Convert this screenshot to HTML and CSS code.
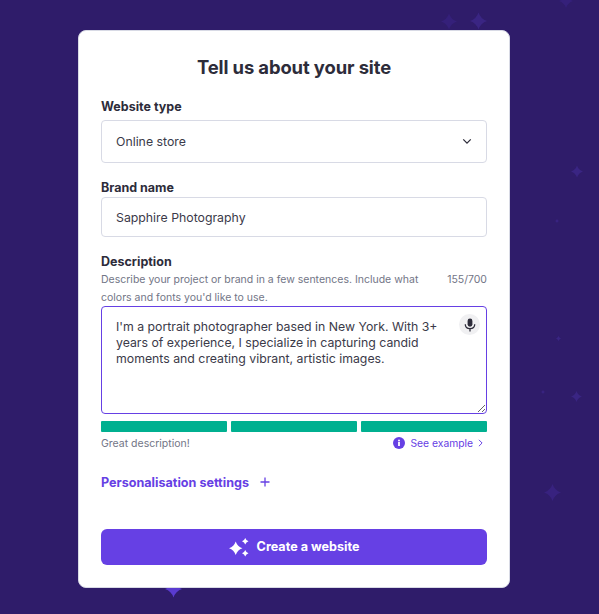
FILE: index.html
```html
<!DOCTYPE html>
<html lang="en">
<head>
<meta charset="utf-8">
<title>Tell us about your site</title>
<link rel="stylesheet" href="styles.css">
</head>
<body>
<svg width="0" height="0" class="defs"><defs><path id="star" d="M12 0Q15 9 24 12Q15 15 12 24Q9 15 0 12Q9 9 12 0Z"/></defs></svg>
<svg class="spark s1" viewBox="0 0 24 24"><use href="#star"/></svg>
<svg class="spark s2" viewBox="0 0 24 24"><use href="#star"/></svg>
<svg class="spark s3" viewBox="0 0 24 24"><use href="#star"/></svg>
<svg class="spark s4" viewBox="0 0 24 24"><use href="#star"/></svg>
<svg class="spark s5" viewBox="0 0 24 24"><use href="#star"/></svg>
<svg class="spark s6" viewBox="0 0 24 24"><use href="#star"/></svg>
<svg class="spark s7" viewBox="0 0 24 24"><use href="#star"/></svg>
<svg class="spark s8" viewBox="0 0 24 24"><use href="#star"/></svg>
<svg class="spark s9" viewBox="0 0 24 24"><use href="#star"/></svg>
<svg class="spark s10" viewBox="0 0 24 24"><use href="#star"/></svg>
<main class="card">
  <h1 class="title">Tell us about your site</h1>
  <div class="label label-type">Website type</div>
  <div class="field select">
    <span>Online store</span>
    <svg class="chevron" viewBox="0 0 12 8"><path d="M1.5 1.5L6 6L10.5 1.5" fill="none" stroke="#2d2c3a" stroke-width="1.5"/></svg>
  </div>
  <div class="label label-brand">Brand name</div>
  <div class="field input">Sapphire Photography</div>
  <div class="label label-desc">Description</div>
  <div class="help-row">
    <p class="help">Describe your project or brand in a few sentences. Include what colors and fonts you'd like to use.</p>
    <span class="count">155/700</span>
  </div>
  <div class="textarea">
    <p class="textarea-text">I'm a portrait photographer based in New York. With 3+ years of experience, I specialize in capturing candid moments and creating vibrant, artistic images.</p>
    <span class="mic">
      <svg viewBox="0 0 14 16" width="12" height="14"><rect x="4.2" y="0.5" width="5.6" height="9.5" rx="2.8" fill="#2d2c3a"/><path d="M1.5 7.2C1.5 10.4 4 12.3 7 12.3C10 12.3 12.5 10.4 12.5 7.2M7 12.3V15.5" fill="none" stroke="#2d2c3a" stroke-width="1.5"/></svg>
    </span>
  </div>
  <div class="bars"><span class="bar"></span><span class="bar"></span><span class="bar"></span></div>
  <div class="status">
    <span>Great description!</span>
    <span class="example">
      <svg class="info" viewBox="0 0 12 12"><circle cx="6" cy="6" r="6" fill="#6640e4"/><rect x="5.1" y="5" width="1.8" height="4" fill="#fff"/><rect x="5.1" y="2.7" width="1.8" height="1.6" fill="#fff"/></svg>
      <span>See example</span>
      <svg class="next" viewBox="0 0 6 10"><path d="M1 1L5 5L1 9" fill="none" stroke="#6640e4" stroke-width="1.2"/></svg>
    </span>
  </div>
  <div class="personal">
    <span>Personalisation settings</span>
    <svg class="plus" viewBox="0 0 10 10"><path d="M5 0.5V9.5M0.5 5H9.5" stroke="#6640e4" stroke-width="1.3"/></svg>
  </div>
  <div class="button">
    <svg class="magic" viewBox="0 0 20 20"><use href="#star" transform="translate(0 4.5) scale(.56)"/><use href="#star" transform="translate(13 1) scale(.27)"/><use href="#star" transform="translate(13 13) scale(.27)"/></svg>
    <span class="button-text">Create a website</span>
  </div>
</main>
</body>
</html>
```

FILE: styles.css
```css
* { box-sizing: border-box; }
html, body { margin: 0; height: 100%; }
body {
  position: relative;
  width: 599px;
  height: 614px;
  overflow: hidden;
  background: #2f1c6a;
  font-family: "Inter", "Noto Sans", sans-serif;
  color: #2d2c3a;
  padding: 30px 0 0 78px;
}
.defs { position: absolute; }
.spark { position: absolute; fill: #3a2583; }
.s1 { left: 441px; top: 13px; width: 16px; height: 17px; fill: #35207a; }
.s2 { left: 470px; top: 12px; width: 17px; height: 18px; }
.s3 { left: 559px; top: -6px; width: 14px; height: 14px; fill: #35207a; }
.s4 { left: 571px; top: 165px; width: 12px; height: 13px; }
.s5 { left: 571px; top: 391px; width: 11px; height: 11px; }
.s6 { left: 544px; top: 484px; width: 17px; height: 17px; fill: #38227f; }
.s7 { left: 165px; top: 580px; width: 17px; height: 18px; fill: #5a3bd0; }
.s8 { left: 556px; top: 336px; width: 5px; height: 5px; }
.s9 { left: 555px; top: 219px; width: 4px; height: 4px; }
.s10 { left: 541px; top: 390px; width: 4px; height: 4px; }
.card {
  position: relative;
  width: 432px;
  height: 558px;
  background: #fff;
  border: 1px solid #d8dae5;
  border-radius: 8px;
  padding: 0 22px;
  display: flex;
  flex-direction: column;
}
.title {
  margin: 24px 0 0;
  font-size: 18.4px;
  line-height: 24px;
  font-weight: 700;
  text-align: center;
  letter-spacing: -0.1px;
}
.label { font-size: 12.5px; line-height: 16px; font-weight: 700; }
.label-type { margin-top: 20px; }
.label-brand { margin-top: 17px; }
.label-desc { margin-top: 17px; }
.field {
  border: 1px solid #d8dae5;
  border-radius: 4px;
  padding: 0 14px;
  font-size: 12.3px;
  display: flex;
  align-items: center;
  justify-content: space-between;
}
.select { height: 43px; margin-top: 5px; color: #3b3a49; }
.chevron { width: 10px; height: 7px; }
.input { height: 40px; margin-top: 1px; color: #3b3a49; }
.help-row { display: flex; justify-content: space-between; height: 35px; margin-top: 1px; color: #727586; font-size: 10.5px; line-height: 18px; }
.help { margin: 0; width: 322px; }
.textarea {
  position: relative;
  height: 108px;
  border: 1px solid #6640e4;
  border-radius: 4px;
  padding: 12px 44px 0 14px;
  resize: vertical;
  overflow: auto;
  color: #3b3a49;
}
.textarea-text { margin: 0; font-size: 12.3px; line-height: 16px; }
.mic {
  position: absolute;
  top: 7px;
  right: 6px;
  width: 21px;
  height: 21px;
  border-radius: 50%;
  background: #f0f0f2;
  display: flex;
  align-items: center;
  justify-content: center;
}
.bars { display: flex; gap: 4px; margin-top: 7px; }
.bar { flex: 1; height: 11px; background: #00b090; border-radius: 1px; }
.status {
  display: flex;
  justify-content: space-between;
  align-items: center;
  margin-top: 3px;
  height: 16px;
  font-size: 10.5px;
  color: #727586;
}
.example { display: flex; align-items: center; color: #6640e4; margin-right: 4px; font-size: 10.3px; }
.info { width: 12px; height: 12px; margin-right: 5px; }
.next { width: 5px; height: 8px; margin-left: 5px; }
.personal {
  margin-top: 23px;
  display: flex;
  align-items: center;
  height: 16px;
  font-size: 12.6px;
  font-weight: 700;
  color: #6640e4;
}
.plus { width: 10px; height: 10px; margin-left: 11px; }
.button {
  margin-top: 39px;
  height: 36px;
  border-radius: 6px;
  background: #6640e4;
  color: #fff;
  font-size: 12.6px;
  font-weight: 700;
  display: flex;
  align-items: center;
  justify-content: center;
  gap: 8px;
}
.button-text { margin-bottom: 2px; }
.magic { width: 20px; height: 20px; fill: #fff; }
```
